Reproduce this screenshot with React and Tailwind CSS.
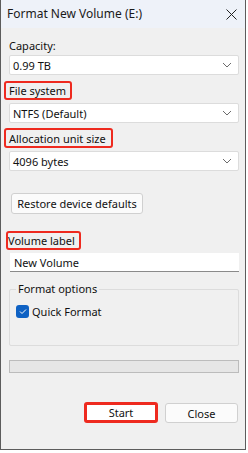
import React from "react";

const font = { fontFamily: "'Noto Sans', 'Open Sans', sans-serif" };

const Chevron = () => (
  <svg width="10" height="6" viewBox="0 0 10 6" className="text-[#6b6b6b]">
    <path d="M1 1 L5 5 L9 1" fill="none" stroke="currentColor" strokeWidth="1" />
  </svg>
);

const Select = ({ value }) => (
  <div className="h-[20px] bg-white border border-[#dcdcdc] rounded-[2px] flex items-center justify-between pl-[3px] pr-[6px] text-[11px] leading-none text-[#111]">
    <span>{value}</span>
    <Chevron />
  </div>
);

const RedLabel = ({ children, className = "" }) => (
  <div className={`inline-flex items-center h-[19px] border-2 border-[#ee2a1f] rounded-[3px] text-[11px] leading-none text-[#111] ${className}`}>
    {children}
  </div>
);

const App = () => {
  return (
    <div className="w-[248px] h-[453px] bg-white leading-none" style={font}>
      <div className="w-[246px] h-[450px] bg-[#f0f0f0] border-l border-r border-b border-[#5c5c5c] flex flex-col">
        {/* Title */}
        <div className="h-[28px] shrink-0 bg-[#eef2f9] flex items-center justify-between pl-[6px] pr-[8px]">
          <span className="text-[12px] text-[#1a1a1a]">Format New Volume (E:)</span>
          <svg width="11" height="11" viewBox="0 0 11 11">
            <path d="M0.5 0.5 L10.5 10.5 M10.5 0.5 L0.5 10.5" stroke="#222" strokeWidth="1" />
          </svg>
        </div>

        <div className="pl-[8px] pr-[6px] flex flex-col">
          <div className="mt-[8px] h-[18px] flex items-center text-[11px] text-[#111]">Capacity:</div>
          <div className="mt-[1px]">
            <Select value="0.99 TB" />
          </div>

          <div className="mt-[6px] -ml-[5px] flex">
            <RedLabel className="pl-[3px] pr-[4px]">File system</RedLabel>
          </div>
          <div className="mt-[3px]">
            <Select value="NTFS (Default)" />
          </div>

          <div className="mt-[5px] -ml-[5px] flex">
            <RedLabel className="h-[20px] pl-[3px] pr-[5px]">Allocation unit size</RedLabel>
          </div>
          <div className="mt-[3px]">
            <Select value="4096 bytes" />
          </div>

          <div className="mt-[22px] ml-[2px] flex">
            <button className="h-[21px] w-[132px] bg-[#fbfbfb] border border-[#d0d0d0] rounded-[3px] text-[11px] leading-none text-[#111]">
              Restore device defaults
            </button>
          </div>

          <div className="mt-[17px] -ml-[3px] flex">
            <RedLabel className="pr-[4px]">Volume label</RedLabel>
          </div>
          <div className="mt-[3px] ml-[1px] h-[19px] bg-white border-b border-[#8a8a8a] flex items-center px-[4px] text-[11px] text-[#111]">
            New Volume
          </div>

          {/* Format options */}
          <div className="mt-[17px] h-[57px] border border-[#dcdcdc] rounded-[2px] relative px-[6px] pt-[15px]">
            <span className="absolute -top-[7px] left-[6px] px-[2px] bg-[#f0f0f0] text-[11px] text-[#111]">Format options</span>
            <div className="flex items-center gap-[3px] text-[11px] text-[#111]">
              <span className="w-[13px] h-[13px] rounded-[3px] bg-[#0f62c4] flex items-center justify-center">
                <svg width="8" height="7" viewBox="0 0 8 7">
                  <path d="M1 3.5 L3 5.5 L7 1.5" fill="none" stroke="#fff" strokeWidth="1" />
                </svg>
              </span>
              <span>Quick Format</span>
            </div>
          </div>

          {/* Progress bar */}
          <div className="mt-[14px] h-[13px] bg-[#e6e6e6] border border-[#bcbcbc]" />

          <div className="mt-[29px] mr-[1px] flex justify-end gap-[7px]">
            <div className="h-[21px] w-[74px] border-[3px] border-[#ee2a1f] rounded-[3px] bg-white flex items-center justify-center text-[11px] text-[#111]">
              Start
            </div>
            <button className="mt-[1px] h-[20px] w-[73px] bg-[#fbfbfb] border border-[#d0d0d0] rounded-[3px] text-[11px] leading-none text-[#111]">
              Close
            </button>
          </div>
        </div>
      </div>
    </div>
  );
};

export default App;
